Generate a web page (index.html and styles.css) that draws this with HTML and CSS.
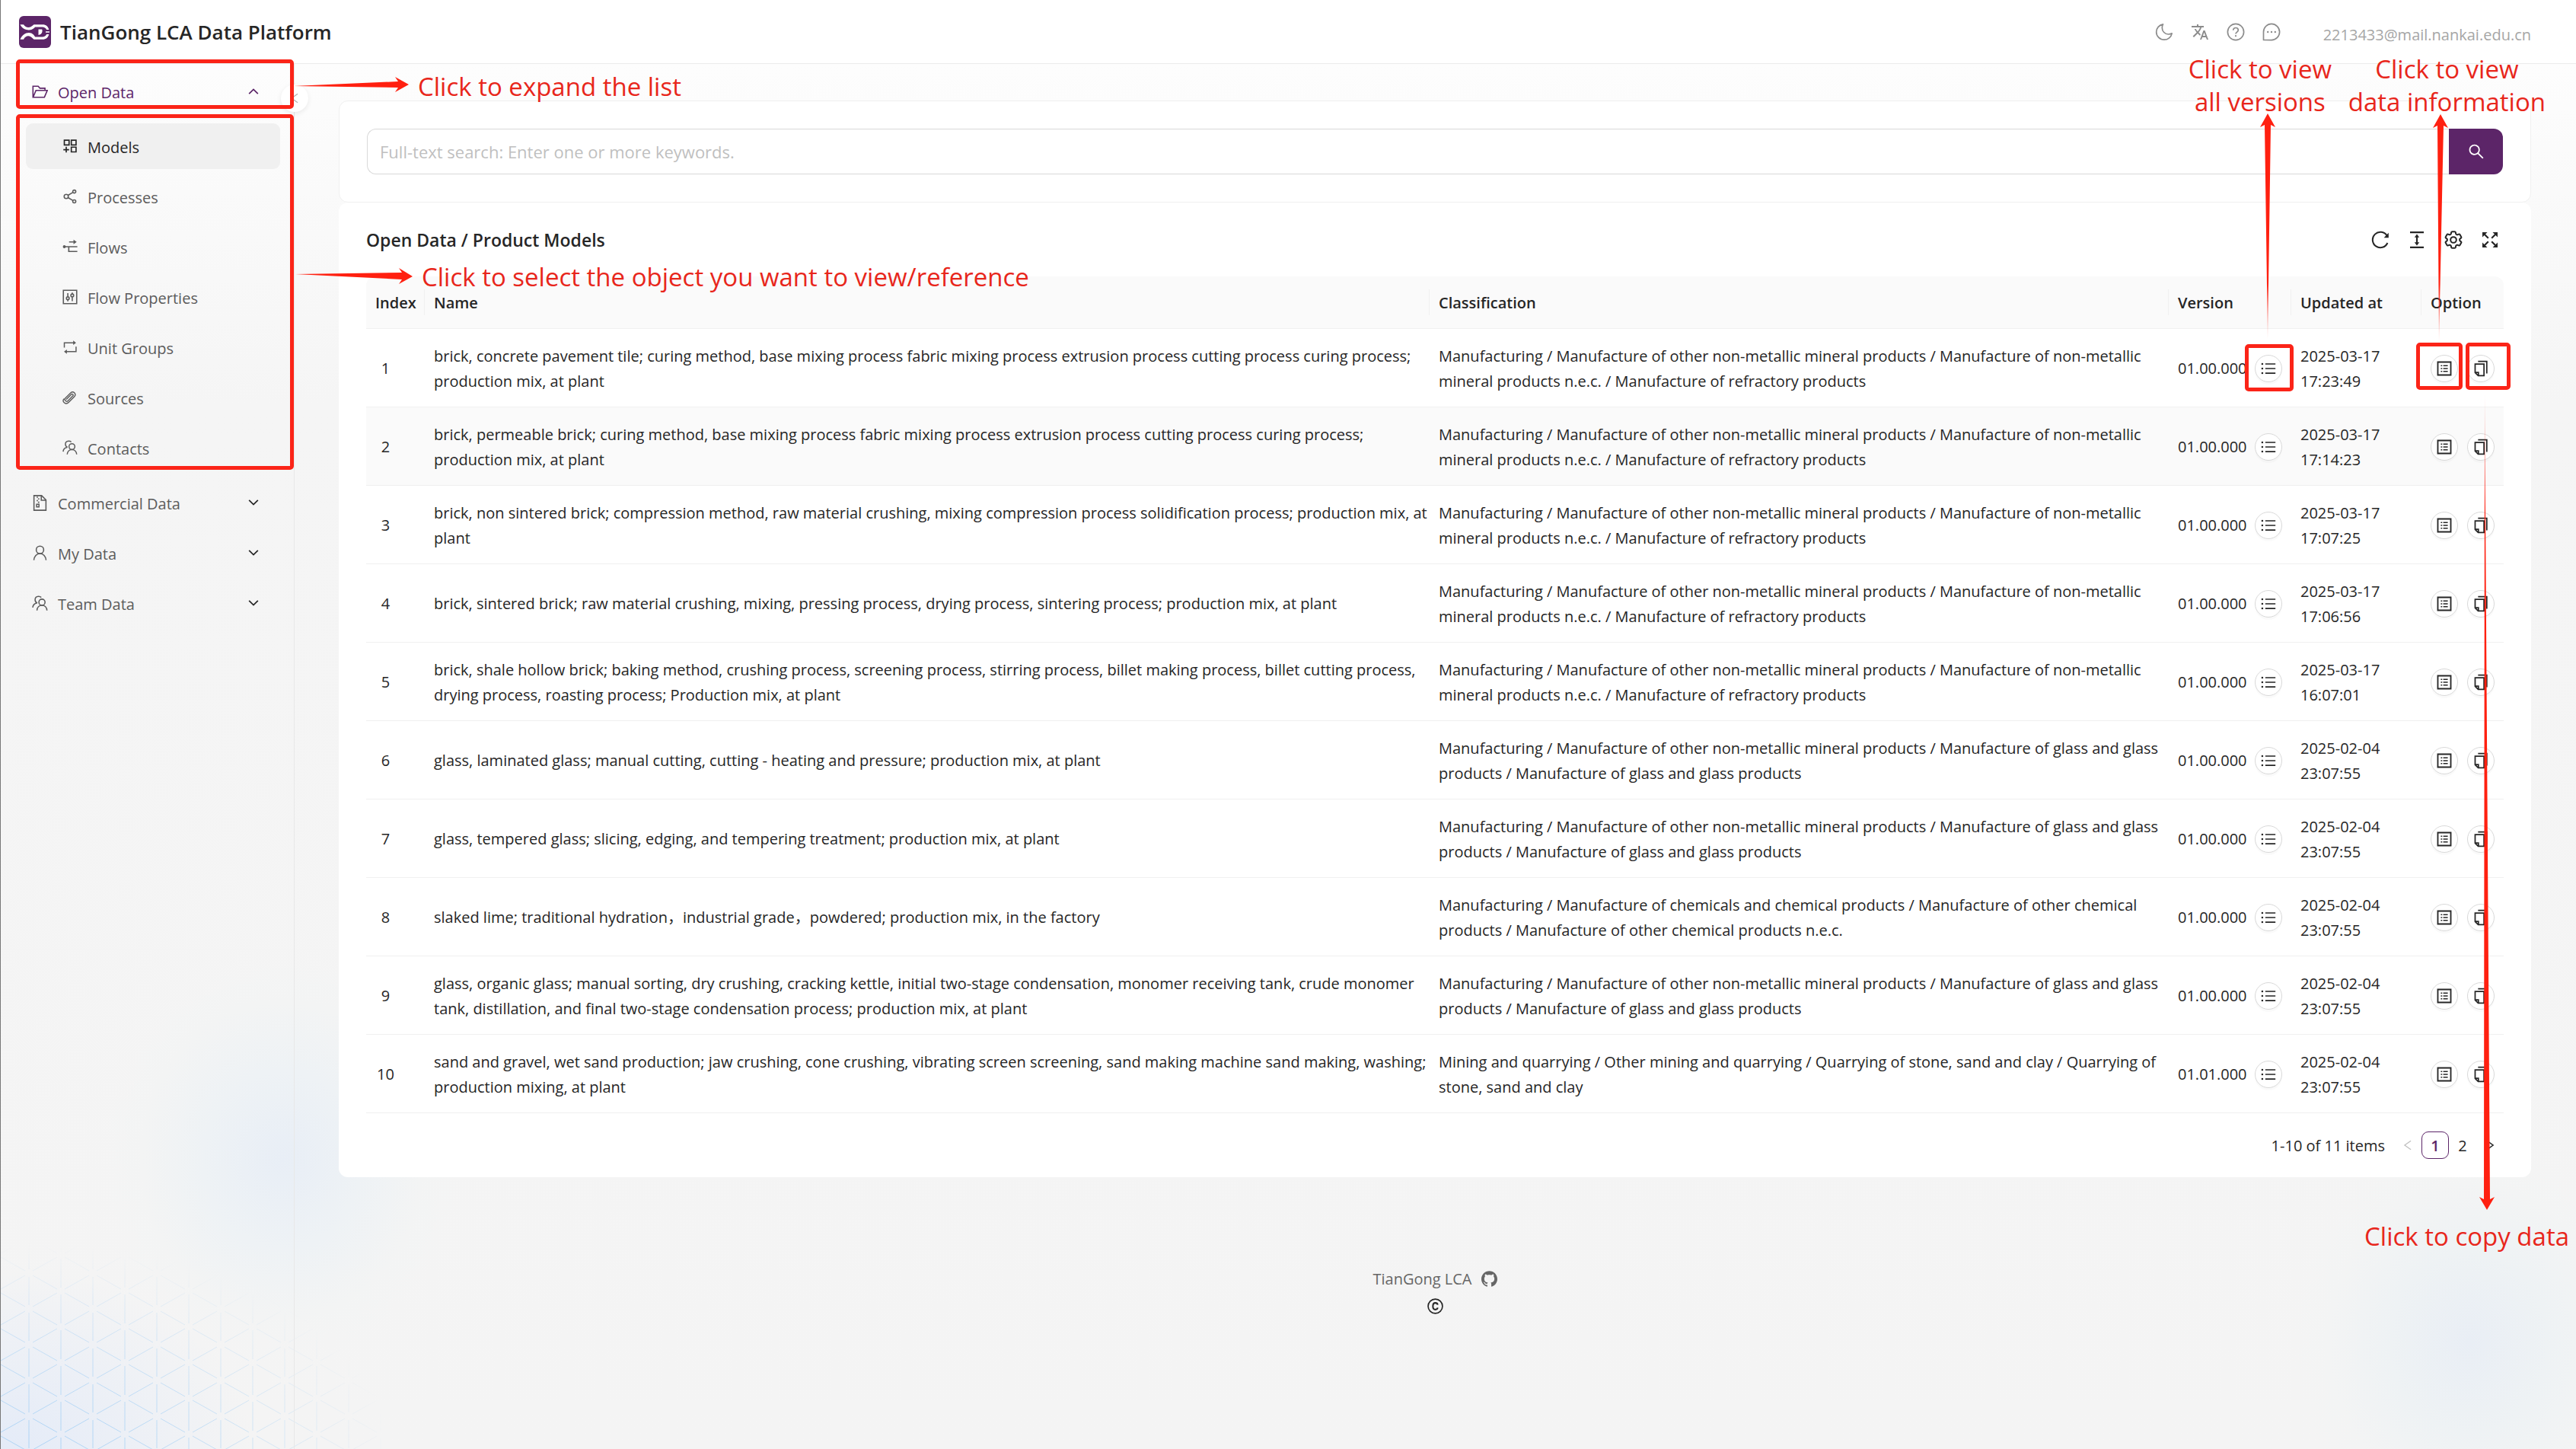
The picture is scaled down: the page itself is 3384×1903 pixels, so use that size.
FILE: index.html
```html
<!DOCTYPE html>
<html lang="en">
<head>
<meta charset="utf-8">
<title>TianGong LCA Data Platform</title>
<link rel="stylesheet" href="styles.css">
</head>
<body>
<svg class="sprite" aria-hidden="true">
  <symbol id="i-list" viewBox="0 0 24 24"><path fill="currentColor" d="M7.5 4.5H22v1.8H7.5zM7.5 11.1H22v1.8H7.5zM7.5 17.7H22v1.8H7.5z"/><circle cx="3.2" cy="5.4" r="1.4" fill="currentColor"/><circle cx="3.2" cy="12" r="1.4" fill="currentColor"/><circle cx="3.2" cy="18.6" r="1.4" fill="currentColor"/></symbol>
  <symbol id="i-profile" viewBox="0 0 24 24"><path fill="none" stroke="currentColor" stroke-width="2" d="M2.700 2.700h18.600v18.600H2.700z"/><path fill="currentColor" d="M10.5 7H17v1.800h-6.500zM10.5 11.100H17v1.800h-6.500zM10.5 15.200H17V17h-6.500zM7 7h2v1.800H7zM7 11.100h2v1.800H7zM7 15.200h2V17H7z"/></symbol>
  <symbol id="i-copy" viewBox="0 0 24 24"><path fill="none" stroke="currentColor" stroke-width="1.900" d="M8 1.800h12.500V19M3.800 5.500h12.700v16.700H8.200l-4.400-4.400zM4 17.500h4.500V22"/></symbol>
  <symbol id="i-down" viewBox="0 0 24 24"><path fill="none" stroke="currentColor" stroke-width="3" d="M2 6.500l10 10 10-10"/></symbol>
  <symbol id="i-up" viewBox="0 0 24 24"><path fill="none" stroke="currentColor" stroke-width="3" d="M2 17.500l10-10 10 10"/></symbol>
  <symbol id="i-left" viewBox="0 0 24 24"><path fill="none" stroke="currentColor" stroke-width="2.200" d="M19 2L5 12l14 10"/></symbol>
  <symbol id="i-right" viewBox="0 0 24 24"><path fill="none" stroke="currentColor" stroke-width="2.600" d="M5 2l14 10L5 22"/></symbol>
  <symbol id="i-team" viewBox="0 0 24 24"><g fill="none" stroke="currentColor" stroke-width="1.800"><circle cx="15" cy="10.200" r="4.600"/><path d="M7.500 22.500c.3-4.500 3.300-7.600 7.500-7.600s7.200 3.100 7.500 7.600M14 3C12.800 1.900 11.300 1.400 9.700 1.500 6.700 1.700 4.600 3.900 4.700 6.700c.1 2.200 1.500 3.900 3.300 4.700M7.500 11.400C4 11.900 1.500 14.300 1.100 18.200"/></g></symbol>
</svg>

<div class="backdrop" aria-hidden="true">
  <div class="glow glow-left"></div>
  <div class="glow glow-right"></div>
  <svg class="lattice" width="520" height="300" viewBox="0 0 520 300">
    <defs>
      <pattern id="tri" width="84" height="47" patternUnits="userSpaceOnUse" patternTransform="translate(37 22)">
        <path fill="none" stroke="#a9d2f5" stroke-width="1" d="M0 5V42M84 5V42M42 0V19M42 28V47M5 3L37 21M47 26L79 44M5 44L37 26M47 21L79 3"/>
      </pattern>
      <radialGradient id="fade" gradientUnits="userSpaceOnUse" cx="0" cy="0" r="1" gradientTransform="translate(40 320) scale(480 290)">
        <stop offset="0" stop-color="#fff"/><stop offset=".5" stop-color="#fff" stop-opacity=".6"/><stop offset="1" stop-color="#fff" stop-opacity="0"/>
      </radialGradient>
      <mask id="m"><rect width="520" height="300" fill="url(#fade)"/></mask>
    </defs>
    <rect width="500" height="300" fill="url(#tri)" mask="url(#m)"/>
  </svg>
</div>

<header class="topbar">
  <a class="brand" href="#">
    <svg class="logo" viewBox="0 0 42 42"><rect width="42" height="42" rx="6" fill="#5c2568"/><path fill="#fff" d="M1.500 11.200H6c2.200 4 7.800 5 11.300 1.800L19.500 11.200H31c4.500 0 7.300 2.600 8.300 6.800h-3.100c-1-2.200-3-3.400-5.600-3.400h-9.400L19 16.500C14 20.300 5 18.500 1.500 11.200zM1.500 30.800H6c2.200-5.200 7.800-6.200 11.300-2l2.200 2H31c4.500 0 7.300-2.600 8.300-6.800h-3.100c-1 2.200-3 3.400-5.600 3.400h-9.400L19 24.500C14 19.700 5 22 1.500 30.800zM25.500 17.500h4.700c1 2.500.2 6.800-4.700 7.500zM35 20.300h5v1.500h-5z"/></svg>
    <span class="brand-name">TianGong LCA Data Platform</span>
  </a>
  <div class="tools">
    <button class="tool" aria-label="Dark mode"><svg viewBox="0 0 24 24"><path fill="none" stroke="currentColor" stroke-width="1.700" stroke-linejoin="round" d="M10.500 1.800c-.8 1.400-1.200 3-1.200 4.600 0 4.800 3.700 8.600 8.300 8.600 1.700 0 3.200-.4 4.600-1.200-1 4.900-5.200 8.400-10.200 8.400C6.200 22.200 1.700 17.600 1.700 12c0-5 3.700-9.300 8.800-10.200z"/></svg></button>
    <button class="tool" aria-label="Language"><svg viewBox="0 0 24 24"><path fill="currentColor" d="M12.870 15.070l-2.540-2.510.03-.03c1.740-1.940 2.980-4.170 3.710-6.530H17V4h-7V2H8v2H1v1.990h11.170C11.500 7.920 10.440 9.750 9 11.350 8.070 10.320 7.300 9.190 6.690 8h-2c.73 1.630 1.730 3.170 2.980 4.560l-5.090 5.020L4 19l5-5 3.110 3.110.76-2.040zM18.500 10h-2L12 22h2l1.120-3h4.750L21 22h2l-4.500-12zm-2.620 7l1.620-4.330L19.120 17h-3.240z"/></svg></button>
    <button class="tool" aria-label="Help"><svg viewBox="0 0 24 24"><g fill="none" stroke="currentColor" stroke-width="1.700"><circle cx="12" cy="12" r="10.600"/><path d="M8.700 9.800c0-1.900 1.400-3.300 3.300-3.300s3.300 1.300 3.300 3.100c0 2.500-3.300 2.500-3.300 5"/></g><circle cx="12" cy="17.200" r="1.100" fill="currentColor"/></svg></button>
    <button class="tool" aria-label="Messages"><svg viewBox="0 0 24 24"><path fill="none" stroke="currentColor" stroke-width="1.700" stroke-linejoin="round" d="M1.500 22.500V12C1.500 6.200 6.200 1.400 12 1.400S22.600 6.200 22.600 12 17.800 22.600 12 22.600z"/><circle cx="7.200" cy="12" r="1.200" fill="currentColor"/><circle cx="12" cy="12" r="1.200" fill="currentColor"/><circle cx="16.800" cy="12" r="1.200" fill="currentColor"/></svg></button>
    <a class="account" href="#">2213433@mail.nankai.edu.cn</a>
  </div>
</header>

<div class="layout">
  <nav class="sider" aria-label="Main">
    <button class="nav-item nav-open"><svg class="ico" viewBox="0 0 24 24"><path fill="none" stroke="currentColor" stroke-width="1.800" d="M4.500 20.200H1.500V3.800h7.800l2.700 2.900h7.500V10M1.700 20.200L6 10h17l-4.300 10.200z"/></svg><span class="nav-label">Open Data</span><svg class="chev"><use href="#i-up"/></svg></button>
    <div class="sub">
      <a class="nav-item current" href="#"><svg class="ico" viewBox="0 0 24 24"><path fill="none" stroke="currentColor" stroke-width="2" d="M3 2.500h7.500V10H3zM14 2.500h7.500V10H14zM14 13.500h7.500V21H14zM6 13v9M1.500 17.500h9"/></svg><span class="nav-label">Models</span></a>
      <a class="nav-item" href="#"><svg class="ico" viewBox="0 0 24 24"><g fill="none" stroke="currentColor" stroke-width="1.900"><circle cx="6" cy="12" r="3.300"/><circle cx="18.700" cy="4.300" r="2.400"/><circle cx="18.700" cy="19.700" r="2.400"/><path d="M8.800 10.200l7.800-4.700M8.800 13.800l7.800 4.700"/></g></svg><span class="nav-label">Processes</span></a>
      <a class="nav-item" href="#"><svg class="ico" viewBox="0 0 24 24"><path fill="none" stroke="currentColor" stroke-width="2" d="M3 12h20.500M10 12v7.500h13.500M10.500 4.500H20"/><circle cx="3" cy="12" r="2.300" fill="currentColor"/><path fill="currentColor" d="M17.500.8L22.500 4.500l-5 3.700z"/></svg><span class="nav-label">Flows</span></a>
      <a class="nav-item" href="#"><svg class="ico" viewBox="0 0 24 24"><g fill="none" stroke="currentColor" stroke-width="1.900"><path d="M1.500 1.500h21v21h-21zM8.500 6v5.500M8.500 16.500V19M15.500 5v2.500M15.500 12v6.500"/><circle cx="8.500" cy="14" r="2.200"/><circle cx="15.500" cy="9.500" r="2.200"/></g></svg><span class="nav-label">Flow Properties</span></a>
      <a class="nav-item" href="#"><svg class="ico" viewBox="0 0 24 24"><path fill="none" stroke="currentColor" stroke-width="1.800" d="M3 12.500V5h15M21.500 11v8H6"/><path fill="currentColor" d="M17 1.500L21.500 5 17 8.500zM7 15.500L2.500 19 7 22.500z"/></svg><span class="nav-label">Unit Groups</span></a>
      <a class="nav-item" href="#"><svg class="ico" viewBox="0 0 24 24"><path fill="none" stroke="currentColor" stroke-width="1.700" stroke-linecap="round" d="M6.500 14.700l7.700-7.700c1.300-1.300 3.700.9 2.400 2.400l-7.900 8c-2.700 2.300-6.300-1.600-4.200-4.200l8.800-8.800c3.600-3.300 9.200 1.900 5.700 6l-9 9.200C5 24.500-.8 18.400 2.200 14.500"/></svg><span class="nav-label">Sources</span></a>
      <a class="nav-item" href="#"><svg class="ico"><use href="#i-team"/></svg><span class="nav-label">Contacts</span></a>
    </div>
    <button class="nav-item"><svg class="ico" viewBox="0 0 24 24"><path fill="none" stroke="currentColor" stroke-width="1.800" d="M3 1h11.500L21 7.500V23H3zM14 1v7h7M7 3.500h2M9 6h2M7 8.500h2M9 11h2M7 14h3.500v4H7z"/></svg><span class="nav-label">Commercial Data</span><svg class="chev"><use href="#i-down"/></svg></button>
    <button class="nav-item"><svg class="ico" viewBox="0 0 24 24"><g fill="none" stroke="currentColor" stroke-width="1.800"><circle cx="12" cy="7" r="5.600"/><path d="M2.800 22.500c.5-5.800 4.200-9.900 9.200-9.900s8.700 4.100 9.200 9.900"/></g></svg><span class="nav-label">My Data</span><svg class="chev"><use href="#i-down"/></svg></button>
    <button class="nav-item"><svg class="ico"><use href="#i-team"/></svg><span class="nav-label">Team Data</span><svg class="chev"><use href="#i-down"/></svg></button>
    <button class="collapse" aria-label="Collapse menu"><svg><use href="#i-left"/></svg></button>
  </nav>

  <div class="content">
    <main>
      <form class="card search">
        <input type="text" aria-label="Full-text search" placeholder="Full-text search: Enter one or more keywords.">
        <button type="button" aria-label="Search"><svg viewBox="0 0 1024 1024"><path fill="currentColor" d="M909.600 854.500L649.900 594.800C690.200 542.700 712 479 712 412c0-80.200-31.300-155.400-87.900-212.100-56.600-56.700-132-87.900-212.100-87.900s-155.500 31.300-212.100 87.900C143.200 256.500 112 331.800 112 412c0 80.100 31.300 155.500 87.900 212.100C256.500 680.800 331.800 712 412 712c67 0 130.600-21.800 182.700-62l259.700 259.600a8.200 8.200 0 0011.600 0l43.600-43.500a8.200 8.200 0 000-11.600zM570.400 570.400C528 612.700 471.800 636 412 636s-116-23.300-158.400-65.600C211.300 528 188 471.800 188 412s23.300-116.100 65.600-158.400C296 211.300 352.200 188 412 188s116.100 23.200 158.400 65.600S636 352.200 636 412s-23.300 116.100-65.600 158.400z"/></svg></button>
      </form>

      <section class="card listing">
        <div class="listing-head">
          <h1>Open Data / Product Models</h1>
          <div class="actions">
            <button aria-label="Reload"><svg viewBox="0 0 24 24"><path fill="none" stroke="currentColor" stroke-width="2" d="M20.600 6.400A10.200 10.200 0 1 0 21.400 16"/><path fill="currentColor" d="M22.800 2.800v6.400h-6.200z"/></svg></button>
            <button aria-label="Density"><svg viewBox="0 0 24 24"><path fill="none" stroke="currentColor" stroke-width="2.200" d="M3 2.200h18M3 21.800h18M12 7v10"/><path fill="currentColor" d="M12 4.500l3.200 4.200H8.800zM12 19.500l3.200-4.200H8.800z"/></svg></button>
            <button aria-label="Column settings"><svg viewBox="2 2 20 20"><path fill="none" stroke="currentColor" stroke-width="1.700" d="M9.594 3.940c.09-.542.56-.94 1.110-.94h2.593c.55 0 1.020.398 1.110.94l.213 1.281c.063.374.313.686.645.87.074.04.147.083.22.127.325.196.72.257 1.075.124l1.217-.456a1.125 1.125 0 0 1 1.370.49l1.296 2.247a1.125 1.125 0 0 1-.26 1.431l-1.003.827c-.293.241-.438.613-.43.992a7.723 7.723 0 0 1 0 .255c-.008.378.137.75.43.991l1.004.827c.424.35.534.955.26 1.430l-1.298 2.247a1.125 1.125 0 0 1-1.369.491l-1.217-.456c-.355-.133-.75-.072-1.076.124a6.470 6.470 0 0 1-.22.128c-.331.183-.581.495-.644.869l-.213 1.281c-.09.543-.56.94-1.110.94h-2.594c-.55 0-1.019-.398-1.110-.94l-.213-1.281c-.062-.374-.312-.686-.644-.87a6.520 6.520 0 0 1-.22-.127c-.325-.196-.72-.257-1.076-.124l-1.217.456a1.125 1.125 0 0 1-1.369-.49l-1.297-2.247a1.125 1.125 0 0 1 .26-1.431l1.004-.827c.292-.24.437-.613.43-.991a6.932 6.932 0 0 1 0-.255c.007-.38-.138-.751-.43-.992l-1.004-.827a1.125 1.125 0 0 1-.26-1.430l1.297-2.247a1.125 1.125 0 0 1 1.370-.491l1.216.456c.356.133.751.072 1.076-.124.072-.044.146-.086.22-.128.332-.183.582-.495.644-.869l.214-1.280Z"/><circle cx="12" cy="12" r="3.200" fill="none" stroke="currentColor" stroke-width="1.700"/></svg></button>
            <button aria-label="Full screen"><svg viewBox="0 0 24 24"><path fill="none" stroke="currentColor" stroke-width="2.200" d="M4 4l5.800 5.800M20 4l-5.800 5.800M4 20l5.800-5.800M20 20l-5.800-5.800"/><path fill="currentColor" d="M2 2h6.500L2 8.500zM22 2v6.500L15.500 2zM2 22v-6.500L8.500 22zM22 22h-6.500l6.500-6.500z"/></svg></button>
          </div>
        </div>

        <table>
          <colgroup><col class="c-index"><col><col class="c-class"><col class="c-version"><col class="c-updated"><col class="c-option"></colgroup>
          <thead>
            <tr><th>Index</th><th>Name</th><th>Classification</th><th>Version</th><th>Updated at</th><th>Option</th></tr>
          </thead>
          <tbody>
            <tr><td><span class="num">1</span></td><td>brick, concrete pavement tile; curing method, base mixing process fabric mixing process extrusion process cutting process curing process; production mix, at plant</td><td>Manufacturing / Manufacture of other non-metallic mineral products / Manufacture of non-metallic mineral products n.e.c. / Manufacture of refractory products</td><td><div class="row">01.00.000<button class="round" aria-label="All versions"><svg><use href="#i-list"/></svg></button></div></td><td>2025-03-17 17:23:49</td><td><div class="opts"><button class="round" aria-label="View"><svg><use href="#i-profile"/></svg></button><button class="round" aria-label="Copy"><svg><use href="#i-copy"/></svg></button></div></td></tr>
            <tr class="hover"><td><span class="num">2</span></td><td>brick, permeable brick; curing method, base mixing process fabric mixing process extrusion process cutting process curing process; production mix, at plant</td><td>Manufacturing / Manufacture of other non-metallic mineral products / Manufacture of non-metallic mineral products n.e.c. / Manufacture of refractory products</td><td><div class="row">01.00.000<button class="round" aria-label="All versions"><svg><use href="#i-list"/></svg></button></div></td><td>2025-03-17 17:14:23</td><td><div class="opts"><button class="round" aria-label="View"><svg><use href="#i-profile"/></svg></button><button class="round" aria-label="Copy"><svg><use href="#i-copy"/></svg></button></div></td></tr>
            <tr><td><span class="num">3</span></td><td>brick, non sintered brick; compression method, raw material crushing, mixing compression process solidification process; production mix, at plant</td><td>Manufacturing / Manufacture of other non-metallic mineral products / Manufacture of non-metallic mineral products n.e.c. / Manufacture of refractory products</td><td><div class="row">01.00.000<button class="round" aria-label="All versions"><svg><use href="#i-list"/></svg></button></div></td><td>2025-03-17 17:07:25</td><td><div class="opts"><button class="round" aria-label="View"><svg><use href="#i-profile"/></svg></button><button class="round" aria-label="Copy"><svg><use href="#i-copy"/></svg></button></div></td></tr>
            <tr><td><span class="num">4</span></td><td>brick, sintered brick; raw material crushing, mixing, pressing process, drying process, sintering process; production mix, at plant</td><td>Manufacturing / Manufacture of other non-metallic mineral products / Manufacture of non-metallic mineral products n.e.c. / Manufacture of refractory products</td><td><div class="row">01.00.000<button class="round" aria-label="All versions"><svg><use href="#i-list"/></svg></button></div></td><td>2025-03-17 17:06:56</td><td><div class="opts"><button class="round" aria-label="View"><svg><use href="#i-profile"/></svg></button><button class="round" aria-label="Copy"><svg><use href="#i-copy"/></svg></button></div></td></tr>
            <tr><td><span class="num">5</span></td><td>brick, shale hollow brick; baking method, crushing process, screening process, stirring process, billet making process, billet cutting process, drying process, roasting process; Production mix, at plant</td><td>Manufacturing / Manufacture of other non-metallic mineral products / Manufacture of non-metallic mineral products n.e.c. / Manufacture of refractory products</td><td><div class="row">01.00.000<button class="round" aria-label="All versions"><svg><use href="#i-list"/></svg></button></div></td><td>2025-03-17 16:07:01</td><td><div class="opts"><button class="round" aria-label="View"><svg><use href="#i-profile"/></svg></button><button class="round" aria-label="Copy"><svg><use href="#i-copy"/></svg></button></div></td></tr>
            <tr><td><span class="num">6</span></td><td>glass, laminated glass; manual cutting, cutting - heating and pressure; production mix, at plant</td><td>Manufacturing / Manufacture of other non-metallic mineral products / Manufacture of glass and glass products / Manufacture of glass and glass products</td><td><div class="row">01.00.000<button class="round" aria-label="All versions"><svg><use href="#i-list"/></svg></button></div></td><td>2025-02-04 23:07:55</td><td><div class="opts"><button class="round" aria-label="View"><svg><use href="#i-profile"/></svg></button><button class="round" aria-label="Copy"><svg><use href="#i-copy"/></svg></button></div></td></tr>
            <tr><td><span class="num">7</span></td><td>glass, tempered glass; slicing, edging, and tempering treatment; production mix, at plant</td><td>Manufacturing / Manufacture of other non-metallic mineral products / Manufacture of glass and glass products / Manufacture of glass and glass products</td><td><div class="row">01.00.000<button class="round" aria-label="All versions"><svg><use href="#i-list"/></svg></button></div></td><td>2025-02-04 23:07:55</td><td><div class="opts"><button class="round" aria-label="View"><svg><use href="#i-profile"/></svg></button><button class="round" aria-label="Copy"><svg><use href="#i-copy"/></svg></button></div></td></tr>
            <tr><td><span class="num">8</span></td><td>slaked lime; traditional hydration，industrial grade，powdered; production mix, in the factory</td><td>Manufacturing / Manufacture of chemicals and chemical products / Manufacture of other chemical products / Manufacture of other chemical products n.e.c.</td><td><div class="row">01.00.000<button class="round" aria-label="All versions"><svg><use href="#i-list"/></svg></button></div></td><td>2025-02-04 23:07:55</td><td><div class="opts"><button class="round" aria-label="View"><svg><use href="#i-profile"/></svg></button><button class="round" aria-label="Copy"><svg><use href="#i-copy"/></svg></button></div></td></tr>
            <tr><td><span class="num">9</span></td><td>glass, organic glass; manual sorting, dry crushing, cracking kettle, initial two-stage condensation, monomer receiving tank, crude monomer tank, distillation, and final two-stage condensation process; production mix, at plant</td><td>Manufacturing / Manufacture of other non-metallic mineral products / Manufacture of glass and glass products / Manufacture of glass and glass products</td><td><div class="row">01.00.000<button class="round" aria-label="All versions"><svg><use href="#i-list"/></svg></button></div></td><td>2025-02-04 23:07:55</td><td><div class="opts"><button class="round" aria-label="View"><svg><use href="#i-profile"/></svg></button><button class="round" aria-label="Copy"><svg><use href="#i-copy"/></svg></button></div></td></tr>
            <tr><td><span class="num">10</span></td><td>sand and gravel, wet sand production; jaw crushing, cone crushing, vibrating screen screening, sand making machine sand making, washing; production mixing, at plant</td><td>Mining and quarrying / Other mining and quarrying / Quarrying of stone, sand and clay / Quarrying of stone, sand and clay</td><td><div class="row">01.01.000<button class="round" aria-label="All versions"><svg><use href="#i-list"/></svg></button></div></td><td>2025-02-04 23:07:55</td><td><div class="opts"><button class="round" aria-label="View"><svg><use href="#i-profile"/></svg></button><button class="round" aria-label="Copy"><svg><use href="#i-copy"/></svg></button></div></td></tr>
          </tbody>
        </table>

        <div class="pager">
          <span class="total">1-10 of 11 items</span>
          <button class="page" disabled aria-label="Previous page"><svg><use href="#i-left"/></svg></button>
          <button class="page active">1</button>
          <button class="page">2</button>
          <button class="page" aria-label="Next page"><svg><use href="#i-right"/></svg></button>
        </div>
      </section>
    </main>

    <footer>
      <a class="project" href="#">TianGong LCA <svg viewBox="0 0 24 24"><path fill="currentColor" d="M12 .297c-6.630 0-12 5.373-12 12 0 5.303 3.438 9.800 8.205 11.385.6.113.82-.258.82-.577 0-.285-.01-1.040-.015-2.040-3.338.724-4.042-1.610-4.042-1.610C4.422 18.070 3.633 17.700 3.633 17.700c-1.087-.744.084-.729.084-.729 1.205.084 1.838 1.236 1.838 1.236 1.070 1.835 2.809 1.305 3.495.998.108-.776.417-1.305.76-1.605-2.665-.3-5.466-1.332-5.466-5.930 0-1.310.465-2.380 1.235-3.220-.135-.303-.54-1.523.105-3.176 0 0 1.005-.322 3.300 1.230.96-.267 1.980-.399 3-.405 1.020.006 2.040.138 3 .405 2.280-1.552 3.285-1.230 3.285-1.230.645 1.653.24 2.873.12 3.176.765.84 1.230 1.910 1.230 3.220 0 4.610-2.805 5.625-5.475 5.920.42.36.81 1.096.81 2.220 0 1.606-.015 2.896-.015 3.286 0 .315.21.69.825.57C20.565 22.092 24 17.592 24 12.297c0-6.627-5.373-12-12-12"/></svg></a>
      <svg class="copyright" viewBox="0 0 24 24" role="img" aria-label="Copyright"><g fill="none" stroke="currentColor" stroke-width="1.900"><circle cx="12" cy="12" r="10.800"/><path stroke-width="2.300" d="M15.600 9.800C15.300 8 13.900 7 12.100 7 9.800 7 8.400 8.700 8.400 12s1.400 5 3.700 5c1.800 0 3.200-1 3.500-2.800"/></g></svg>
    </footer>
  </div>
</div>

<div class="notes">
  <div class="frame f-group"></div>
  <div class="frame f-menu"></div>
  <div class="frame f-version"></div>
  <div class="frame f-view"></div>
  <div class="frame f-copy"></div>
  <svg class="arrows-left" width="170" height="290" viewBox="0 0 170 290"><path d="M0 17L137 11 133 5 151 15 133 25 137 19z"/><path d="M2 264L142 262 138 256 156 267 138 277 142 271z"/></svg>
  <svg class="arrows-right" width="320" height="1450" viewBox="0 0 320 1450">
    <defs><linearGradient id="up" x1="0" y1="0" x2="0" y2="1"><stop offset=".75" stop-color="#ff2010"/><stop offset="1" stop-color="#ff2010" stop-opacity=".2"/></linearGradient><linearGradient id="dn" x1="0" y1="0" x2="0" y2="1"><stop offset="0" stop-color="#ff2010" stop-opacity=".2"/><stop offset=".15" stop-color="#ff2010"/></linearGradient></defs>
    <path fill="url(#up)" d="M15 9L25 27 19 24 15 306 11 24 5 27z"/>
    <path fill="url(#up)" d="M242 10L252 28 246 25 240 308 238 25 232 28z"/>
    <path fill="url(#dn)" d="M300 374L307 1435 313 1432 303 1449 293 1432 299 1435z"/>
  </svg>
  <p class="note n-expand">Click to expand the list</p>
  <p class="note n-select">Click to select the object you want to view/reference</p>
  <p class="note n-versions">Click to view<br>all versions</p>
  <p class="note n-info">Click to view<br>data information</p>
  <p class="note n-copy">Click to copy data</p>
</div>
</body>
</html>
```
FILE: styles.css
```css
* { box-sizing: border-box; }

body {
  position: relative;
  margin: 0;
  min-height: 100vh;
  display: flex;
  flex-direction: column;
  overflow-x: hidden;
  border-left: 1px solid #777;
  background: linear-gradient(#fff 0, #fdfdfd 84px, #f5f5f5 530px, #f4f4f4);
  color: #262626;
  font: 20px/33px "Open Sans", "Noto Sans CJK SC", sans-serif;
}

button { padding: 0; border: 0; background: none; color: inherit; font: inherit; cursor: pointer; }
a { color: inherit; text-decoration: none; }
svg { display: block; flex: none; }
.sprite { position: absolute; width: 0; height: 0; }

/* backdrop */
.backdrop { position: absolute; inset: 0; overflow: hidden; z-index: -1; background: radial-gradient(ellipse 330px 240px at 0 100%, #e4ebf8, rgba(244, 244, 244, 0)); }
.glow { position: absolute; width: 460px; height: 520px; border-radius: 50%; }
.glow-left { left: 140px; bottom: 120px; background: radial-gradient(closest-side, #e8eef6, #eef2f5 45%, #f3f4f4 80%, rgba(244, 244, 244, 0)); }
.glow-right { right: -90px; bottom: -120px; background: radial-gradient(closest-side, #e9eef5, #eef2f4 45%, #f3f4f4 80%, rgba(244, 244, 244, 0)); }
.lattice { position: absolute; left: 0; bottom: 0; }

/* header */
.topbar { display: flex; justify-content: space-between; align-items: center; height: 84px; padding: 0 59px 0 24px; border-bottom: 1px solid #ebebeb; background: #fff; }
.brand { display: flex; align-items: center; gap: 12px; }
.logo { width: 42px; height: 42px; }
.brand-name { padding-top: 2px; font-size: 26px; font-weight: 600; }
.tools { display: flex; align-items: center; gap: 23px; color: #8c8c8c; }
.tool svg { width: 24px; height: 24px; }
.account { padding: 8px 0 0 33px; color: #a6a6a6; }

/* side menu */
.layout { display: flex; flex: 1; }
.sider { position: relative; display: flex; flex-direction: column; gap: 6px; width: 386px; padding: 6px 18px 6px 33px; border-right: 1px solid #e8e8e8; color: #5c5c5c; }
.sub { display: flex; flex-direction: column; gap: 6px; margin: 6px 0; }
.nav-item { display: flex; align-items: center; gap: 13px; height: 60px; padding: 0 28px 0 8px; border-radius: 9px; text-align: left; }
.sub .nav-item { padding-left: 48px; }
.nav-open { color: #5c2568; }
.current { background: #f0f0f0; color: #262626; }
.nav-label { flex: 1; padding-top: 2px; }
.ico { width: 21px; height: 21px; }
.sub .ico { width: 20px; height: 20px; }
.chev { width: 14px; height: 14px; color: #262626; }
.nav-open .chev { color: #5c2568; }
.collapse { position: absolute; top: 27px; right: -19px; display: grid; place-items: center; width: 36px; height: 36px; border-radius: 50%; background: #fff; box-shadow: 0 2px 6px rgba(0, 0, 0, .08); color: #b0b0b0; }
.collapse svg { width: 14px; height: 14px; }

/* content */
.content { flex: 1; min-width: 0; display: flex; flex-direction: column; padding: 48px 59px 0 58px; }
.card { border-radius: 12px; background: #fff; }
.search { display: flex; padding: 36px; border: 1px solid #f0f0f0; }
.search input { flex: 1; min-width: 0; height: 60px; padding: 0 16px; border: 1px solid #d9d9d9; border-right: 0; border-radius: 12px 0 0 12px; outline: 0; background: #fff; color: inherit; font: inherit; font-size: 22px; }
.search input::placeholder { color: #bfbfbf; }
.search button { display: grid; place-items: center; width: 71px; border-radius: 0 12px 12px 0; background: #5c2568; color: #fff; }
.search svg { width: 24px; height: 24px; }

.listing { padding: 24px 36px; }
.listing-head { display: flex; justify-content: space-between; align-items: center; height: 50px; margin-bottom: 23px; }
h1 { margin: 0; font-size: 23px; font-weight: 600; }
.actions { display: flex; gap: 24px; padding-right: 6px; }
.actions svg { width: 24px; height: 24px; }

table { width: 100%; table-layout: fixed; border-collapse: separate; border-spacing: 0; }
.c-index { width: 77px; }
.c-class { width: 34.58%; }
.c-version { width: 161px; }
.c-updated { width: 171px; }
.c-option { width: 108px; }
th, td { padding: 18px 0 17px 12px; border-bottom: 1px solid #f0f0f0; text-align: left; }
th { background: linear-gradient(#f0f0f0, #f0f0f0) right center / 1px 34px no-repeat #fafafa; font-weight: 600; }
th:first-child { border-top-left-radius: 12px; }
th:last-child { border-top-right-radius: 12px; background: #fafafa; }
td { height: 103px; }
td:nth-child(5) { padding-right: 48px; }
.hover td { background: #fafafa; }
.num { display: block; width: 27px; text-align: center; }
.row, .opts { display: flex; align-items: center; }
.row { gap: 10px; }
.opts { gap: 12px; }
.round { display: grid; place-items: center; width: 36px; height: 36px; border: 1px solid #d9d9d9; border-radius: 50%; background: #fff; box-shadow: 0 3px 0 rgba(0, 0, 0, .02); }
.round svg { width: 22px; height: 22px; }

.pager { display: flex; justify-content: flex-end; align-items: center; padding-top: 24px; height: 60px; }
.total { margin-right: 12px; }
.page { display: grid; place-items: center; width: 36px; height: 36px; border-radius: 9px; }
.page svg { width: 14px; height: 14px; }
.page:disabled { color: #bfbfbf; }
.active { border: 1px solid #5c2568; color: #5c2568; font-weight: 600; }

footer { display: flex; flex-direction: column; align-items: center; gap: 9px; padding: 117px 0 48px; }
.project { display: flex; align-items: center; gap: 12px; color: #666; }
.project svg, .copyright { width: 21px; height: 21px; }

/* annotations laid over the page */
.notes { position: absolute; inset: 0; overflow: hidden; pointer-events: none; }
.notes > * { position: absolute; }
.frame { border: 5px solid #fb2418; border-radius: 5px; }
.f-group { left: 20px; top: 78px; width: 365px; height: 65px; }
.f-menu { left: 20px; top: 150px; width: 365px; height: 467px; }
.f-version { right: 371px; top: 452px; width: 64px; height: 62px; }
.f-view { right: 149px; top: 450px; width: 61px; height: 62px; }
.f-copy { right: 86px; top: 450px; width: 59px; height: 62px; }
.arrows-left { left: 385px; top: 96px; fill: #ff2010; }
.arrows-right { right: 100px; top: 140px; }
.note { margin: 0; color: #e8261b; font-size: 33px; line-height: 43px; text-align: center; white-space: nowrap; }
.n-expand { left: 548px; top: 92px; }
.n-select { left: 553px; top: 342px; }
.n-versions { right: 321px; top: 69px; }
.n-info { right: 40px; top: 69px; }
.n-copy { right: 9px; top: 1602px; }
```
